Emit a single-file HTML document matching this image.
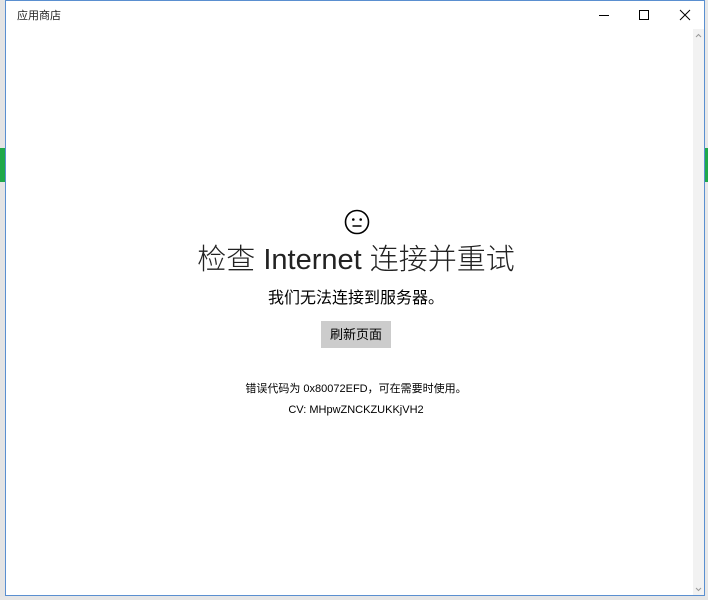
<!DOCTYPE html>
<html><head><meta charset="utf-8"><style>
*{margin:0;padding:0;box-sizing:border-box}
body{width:708px;height:597px;overflow:hidden;background:#e6e6e6;position:relative;font-family:"Liberation Sans","Noto Sans CJK SC",sans-serif;color:#000}
.lstrip{position:absolute;left:0;top:0;width:5px;height:597px;background:#e4e4e4}
.g1{position:absolute;left:0;top:148px;width:5px;height:34px;background:#1fa84a}
.rstrip{position:absolute;left:704px;top:0;width:4px;height:597px;background:#e8e8e8}
.g2{position:absolute;left:704px;top:148px;width:4px;height:34px;background:#1fa84a}
.win{position:absolute;left:5px;top:0;width:700px;height:596px;background:#fff;border:1px solid #5a8fd0}
.title{position:absolute;left:11px;top:6px;font-size:11px;color:#222}
.ctl{position:absolute;top:0;height:30px}
.sb{position:absolute;left:687px;top:28px;width:11px;height:566px;background:#f2f2f2}
.c{position:absolute;left:0;width:700px;text-align:center}
</style></head><body>
<div class="lstrip"></div><div class="g1"></div><div class="rstrip"></div><div class="g2"></div>
<div class="win">
<div class="title">应用商店</div>
<svg class="ctl" style="left:585px;width:110px" viewBox="0 0 110 30">
<line x1="8" y1="14.5" x2="18" y2="14.5" stroke="#000" stroke-width="1"/>
<rect x="48.5" y="9.5" width="9" height="9" fill="none" stroke="#000"/>
<path d="M89 9L99 19M99 9L89 19" stroke="#000" stroke-width="1"/>
</svg>
<div class="sb"><svg width="11" height="566"><path d="M3 8L5.5 5.5L8 8" fill="none" stroke="#999"/><path d="M3 559L5.5 561.5L8 559" fill="none" stroke="#999"/></svg></div>
<svg style="position:absolute;left:337px;top:207px" width="28" height="28" viewBox="0 0 28 28"><circle cx="14" cy="14" r="11.5" fill="none" stroke="#000" stroke-width="1.6"/><circle cx="10.3" cy="11.5" r="1.3"/><circle cx="17.7" cy="11.5" r="1.3"/><line x1="9.5" y1="18" x2="18.5" y2="18" stroke="#000" stroke-width="1.5"/></svg>
<div class="c" style="top:235px;font-size:29px;font-weight:300;color:#222">检查 Internet 连接并重试</div>
<div class="c" style="top:283px;font-size:16px">我们无法连接到服务器。</div>
<div style="position:absolute;left:315px;top:320px;width:70px;height:27px;background:#cccccc;font-size:13px;line-height:27px;text-align:center">刷新页面</div>
<div class="c" style="top:379px;font-size:11px">错误代码为 0x80072EFD，可在需要时使用。</div>
<div class="c" style="top:403px;font-size:11px">CV: MHpwZNCKZUKKjVH2</div>
</div>
</body></html>
